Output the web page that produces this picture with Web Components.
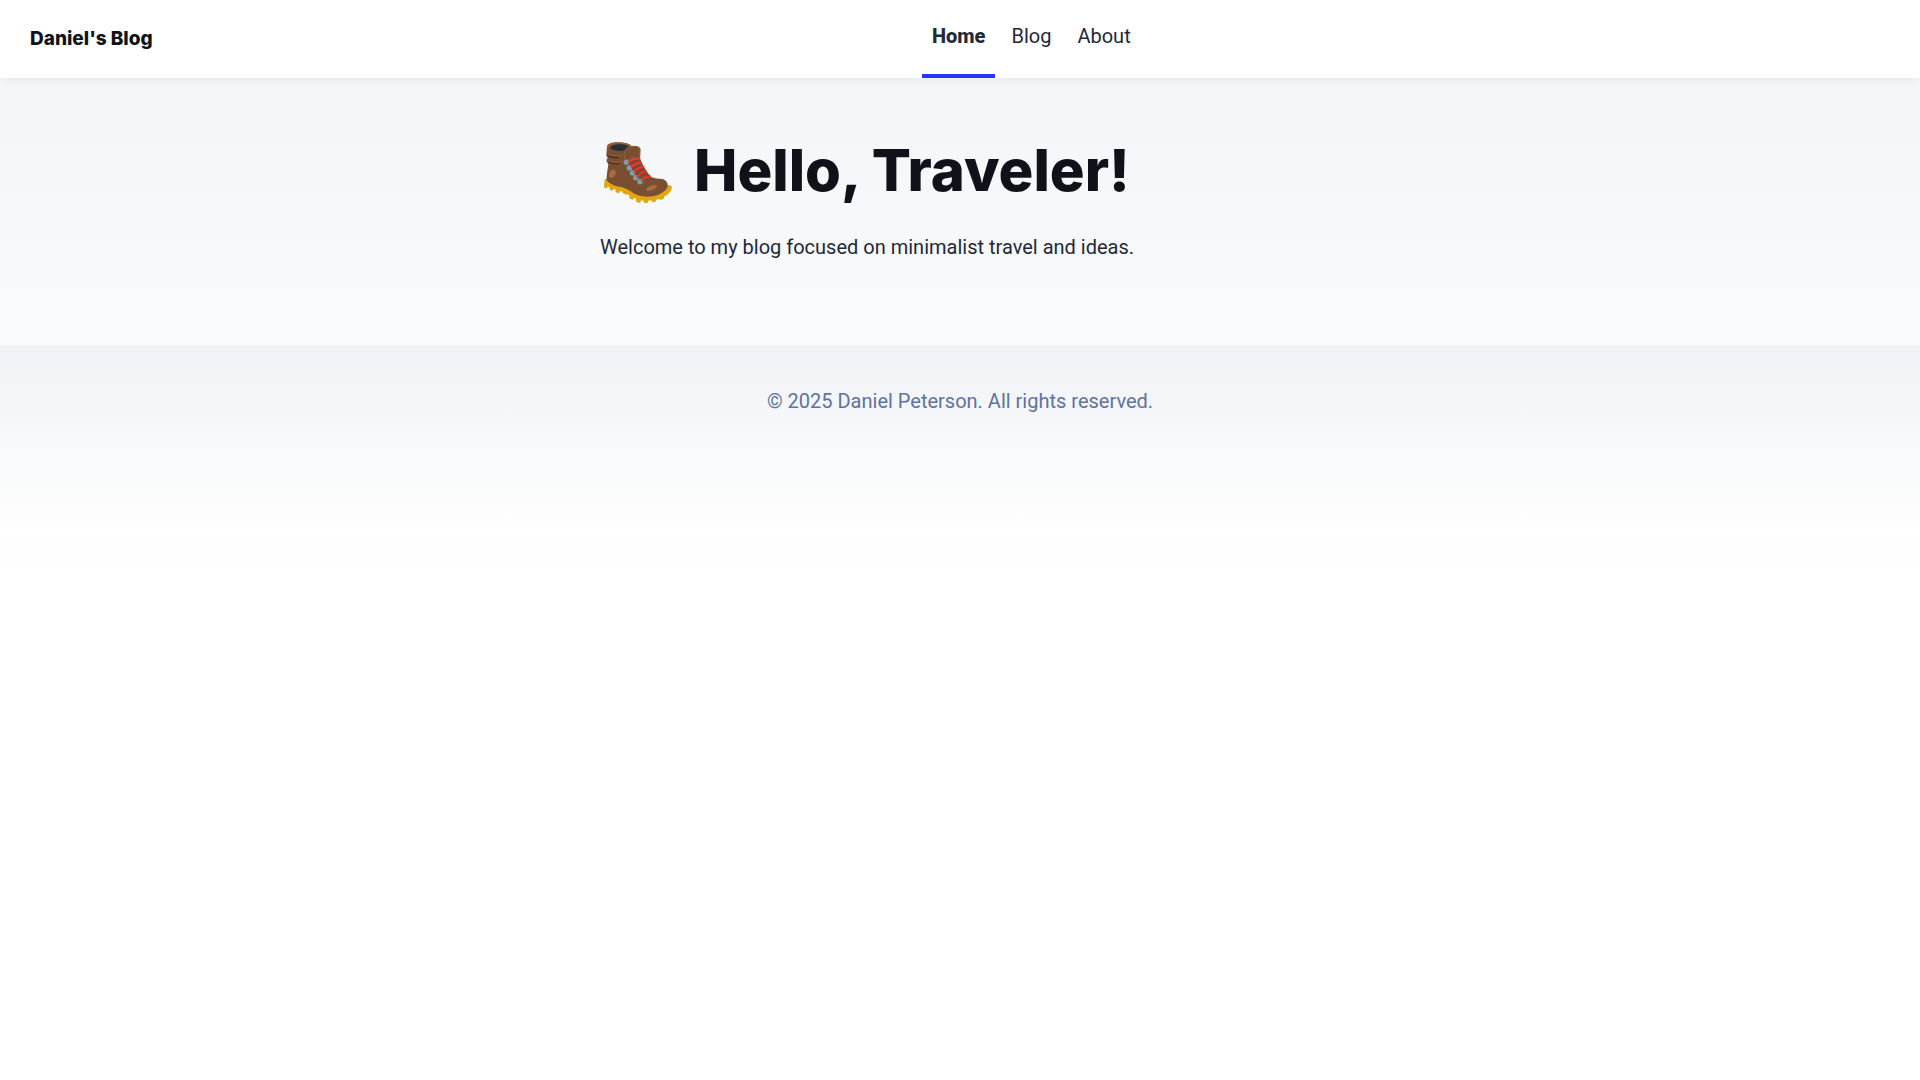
<!DOCTYPE html>
<html lang="en">
<head>
<meta charset="utf-8">
<meta name="viewport" content="width=device-width, initial-scale=1">
<title>Daniel's Blog</title>
<style>
    :root {
        --accent: #2337ff;
        --black: rgb(15, 18, 25);
        --gray: rgb(96, 115, 159);
        --gray-dark: rgb(34, 41, 57);
        --gray-gradient: rgba(229, 233, 240, 0.5), #fff;
        --heading-font: Inter, sans-serif;
    }
    body {
        margin: 0;
        font: 20px/32px Roboto, sans-serif;
        color: var(--gray-dark);
        background: linear-gradient(var(--gray-gradient)) no-repeat;
        background-size: 100% 600px;
    }
</style>
</head>
<body>
<blog-header>
    <a slot="title" href="#home">Daniel's Blog</a>
    <nav-link href="#home" active>Home</nav-link>
    <nav-link href="#blog">Blog</nav-link>
    <nav-link href="#about">About</nav-link>
</blog-header>
<blog-main>
    <boot-icon slot="icon"></boot-icon>
    <span slot="heading">Hello, Traveler!</span>
    Welcome to my blog focused on minimalist travel and ideas.
</blog-main>
<blog-footer>&copy; 2025 Daniel Peterson. All rights reserved.</blog-footer>

<script>
class BlogElement extends HTMLElement {
    constructor() {
        super();
        this.attachShadow({ mode: 'open' });
        this.shadowRoot.innerHTML = `<style>${this.constructor.style}</style>${this.constructor.markup}`;
    }
}

customElements.define('blog-header', class extends BlogElement {
    static style = `
        :host {
            display: block;
            padding: 0 20px;
            background: white;
            box-shadow: 0 2px 8px rgba(15, 18, 25, 0.05);
        }
        nav {
            display: flex;
            align-items: center;
            justify-content: space-between;
        }
        h2 {
            margin: 0;
            padding: 0 10px;
            font: 800 19px/24px var(--heading-font);
        }
        ::slotted(a) {
            color: var(--black);
            text-decoration: none;
        }
        .links {
            display: flex;
            gap: 6px;
        }
    `
    static markup = `
        <header>
            <nav>
                <h2><slot name="title"></slot></h2>
                <div class="links"><slot></slot></div>
                <div class="social"><slot name="social"></slot></div>
            </nav>
        </header>
    `
})

customElements.define('nav-link', class extends BlogElement {
    static style = `
        :host {
            display: block;
        }
        a {
            display: block;
            padding: 20px 10px 22px;
            color: var(--gray-dark);
            text-decoration: none;
            border-bottom: 4px solid transparent;
        }
        :host([active]) a {
            font-weight: 800;
            border-bottom-color: var(--accent);
        }
    `
    static markup = `<a><slot></slot></a>`
    connectedCallback() {
        this.shadowRoot.querySelector('a').href = this.getAttribute('href');
    }
})

customElements.define('blog-main', class extends BlogElement {
    static style = `
        :host {
            display: block;
        }
        main {
            max-width: 720px;
            margin: 0 auto;
            padding: 60px 20px;
        }
        h1 {
            display: flex;
            align-items: flex-start;
            gap: 18px;
            margin: 0;
            color: var(--black);
            font: 800 58px/64px var(--heading-font);
        }
        p {
            margin: 20px 0 22px;
        }
    `
    static markup = `
        <main>
            <h1><slot name="icon"></slot><slot name="heading"></slot></h1>
            <p><slot></slot></p>
        </main>
    `
})

customElements.define('boot-icon', class extends BlogElement {
    static style = `
        :host {
            display: block;
            width: 76px;
            height: 73px;
        }
        svg {
            display: block;
            width: 100%;
            height: 100%;
        }
    `
    static markup = `
        <svg viewBox="15 24 228 219" fill="none" stroke-linecap="round" stroke-linejoin="round" aria-hidden="true">
            <path fill="#e2a610" d="M29 148 L27 170 Q28 175 36 175 L38 170 L43 171 L44 179 L53 182 L56 176 L61 178 L62 187 L72 190 L76 183 L82 185 L84 190 L94 194 L99 193 L103 197 L104 206 L114 209 L117 203 L122 205 L124 216 L135 219 L139 211 L145 212 L148 219 L158 219 L160 212 L169 211 L172 217 L182 215 L184 209 L193 206 L197 210 L206 206 L208 199 Q226 191 231 173 Q231 167 223 166 Z"/>
            <path fill="#7a4e31" d="M36 50 Q36 43 48 39 Q70 34 91 39 Q106 42 110 49 Q133 45 136 58 L135 84 Q140 98 147 111 Q157 129 170 142 Q183 147 203 147 Q220 153 218 170 Q209 190 177 198 Q145 205 119 192 Q94 172 66 169 Q43 162 34 149 Q36 128 40 103 L34 92 Q35 87 38 85 L34 75 Z"/>
            <path stroke="#98633d" stroke-width="4" d="M39 52 Q38 43 60 39 Q88 36 105 48"/>
            <ellipse cx="75" cy="53" rx="28" ry="10" fill="#263238"/>
            <path fill="#7a4e31" stroke="#945f3b" stroke-width="3" d="M89 86 Q84 59 101 51 Q124 45 135 56 L134 84 Q115 80 101 89 Z"/>
            <path stroke="#4f2f25" stroke-width="4" d="M37 76 Q49 84 70 82 M40 96 Q54 104 72 101"/>
            <path stroke="#945f3b" stroke-width="3" d="M37 72 Q49 79 82 77 M37 91 Q52 98 83 96"/>
            <ellipse cx="52" cy="131" rx="9" ry="13" transform="rotate(25 52 131)" fill="#a56c43"/>
            <ellipse cx="169" cy="174" rx="18" ry="7" transform="rotate(-20 169 174)" fill="#a56c43"/>
            <g fill="#78a0ae">
                <circle cx="94" cy="97" r="8"/>
                <circle cx="103" cy="114" r="8"/>
                <circle cx="112" cy="129" r="8"/>
                <circle cx="122" cy="143" r="8"/>
                <circle cx="135" cy="155" r="8"/>
            </g>
            <path stroke="#b52c2b" stroke-width="4" d="M106 91 L137 100 M109 100 L143 114 M117 116 L151 127 M127 132 L159 138"/>
            <path stroke="#f03834" stroke-width="5" d="M100 97 Q113 84 132 86 M109 112 Q119 100 137 98 M118 127 Q126 113 146 110 M127 141 Q135 127 153 123 M139 152 Q145 141 166 139"/>
        </svg>
    `
})

customElements.define('blog-footer', class extends BlogElement {
    static style = `
        :host {
            display: block;
            padding: 40px 20px 122px;
            color: var(--gray);
            text-align: center;
            background: linear-gradient(var(--gray-gradient)) no-repeat;
        }
    `
    static markup = `<footer><slot></slot></footer>`
})
</script>
</body>
</html>
